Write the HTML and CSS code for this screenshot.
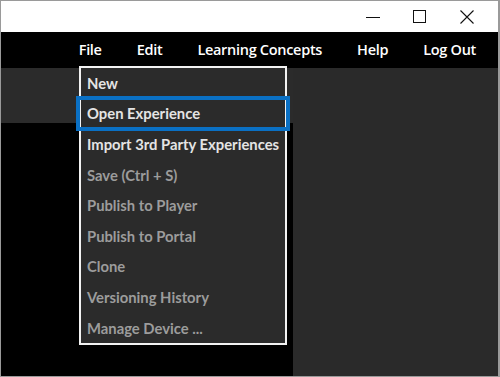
FILE: index.html
```html
<!DOCTYPE html>
<html>
<head>
<meta charset="utf-8">
<link rel="stylesheet" href="styles.css">
</head>
<body>
<div class="window">
  <div class="titlebar">
    <div class="tb-btn">
      <svg width="14" height="14" viewBox="0 0 14 14"><line x1="0" y1="7.5" x2="14" y2="7.5" stroke="#111" stroke-width="1"/></svg>
    </div>
    <div class="tb-btn">
      <svg width="13" height="13" viewBox="0 0 13 13"><rect x="0.5" y="0.5" width="12" height="12" fill="none" stroke="#111" stroke-width="1"/></svg>
    </div>
    <div class="tb-btn">
      <svg width="14" height="14" viewBox="0 0 14 14"><path d="M0.5 0.5 L13.5 13.5 M13.5 0.5 L0.5 13.5" stroke="#111" stroke-width="1.1" fill="none"/></svg>
    </div>
  </div>
  <div class="menubar">
    <span class="menu-item">File</span>
    <span class="menu-item">Edit</span>
    <span class="menu-item">Learning Concepts</span>
    <span class="menu-item">Help</span>
    <span class="menu-item">Log Out</span>
  </div>
  <div class="content">
    <div class="left">
      <div class="toolbar"></div>
      <div class="canvas"></div>
    </div>
    <div class="right"></div>
  </div>
  <ul class="dropdown">
    <li class="dd-item">New</li>
    <li class="dd-item selected">Open Experience</li>
    <li class="dd-item">Import 3rd Party Experiences</li>
    <li class="dd-item disabled">Save (Ctrl + S)</li>
    <li class="dd-item disabled">Publish to Player</li>
    <li class="dd-item disabled">Publish to Portal</li>
    <li class="dd-item disabled">Clone</li>
    <li class="dd-item disabled">Versioning History</li>
    <li class="dd-item disabled">Manage Device ...</li>
  </ul>
</div>
</body>
</html>
```
FILE: styles.css
```css
* { box-sizing: border-box; }
html, body { margin: 0; padding: 0; background: #fff; }
.window {
  position: relative;
  width: 500px;
  height: 377px;
  border: 1px solid #9a9a9a;
  border-right-width: 2px;
  display: flex;
  flex-direction: column;
  overflow: hidden;
}
.titlebar {
  height: 31px;
  background: #fff;
  display: flex;
  justify-content: flex-end;
  align-items: center;
  padding-right: 8px;
  flex-shrink: 0;
}
.tb-btn {
  width: 47px;
  height: 31px;
  display: flex;
  align-items: center;
  justify-content: center;
}
.menubar {
  height: 36px;
  background: #000;
  display: flex;
  justify-content: flex-end;
  align-items: center;
  gap: 35px;
  padding-right: 22px;
  flex-shrink: 0;
}
.menu-item {
  color: #fff;
  font-family: "Open Sans", "Noto Sans", sans-serif;
  font-weight: 600;
  font-size: 14.5px;
  letter-spacing: -0.3px;
  line-height: 1;
}
.content {
  flex: 1;
  display: flex;
}
.left {
  width: 292px;
  display: flex;
  flex-direction: column;
}
.toolbar {
  height: 55px;
  background: #2b2b2b;
}
.canvas {
  flex: 1;
  background: #000;
}
.right {
  flex: 1;
  background: #2a2a2a;
}
.dropdown {
  position: absolute;
  left: 78px;
  top: 65px;
  width: 208px;
  height: 279px;
  margin: 0;
  padding: 0 0 2px 0;
  list-style: none;
  background: #2b2b2b;
  border: 2px solid #f2f2f2;
}
.dd-item {
  position: relative;
  height: 30.6px;
  display: flex;
  align-items: center;
  padding-left: 6px;
  padding-bottom: 1px;
  font-family: "Lato", "Noto Sans", sans-serif;
  font-weight: 700;
  font-size: 14.8px;
  color: #e4e4e4;
  white-space: nowrap;
}
.dd-item.disabled {
  color: #9c9c9c;
}
.dd-item.selected::after {
  content: "";
  position: absolute;
  z-index: 2;
  top: -3px;
  bottom: -2px;
  left: -5px;
  right: -5px;
  border: 4px solid #0a70c4;
}
```
